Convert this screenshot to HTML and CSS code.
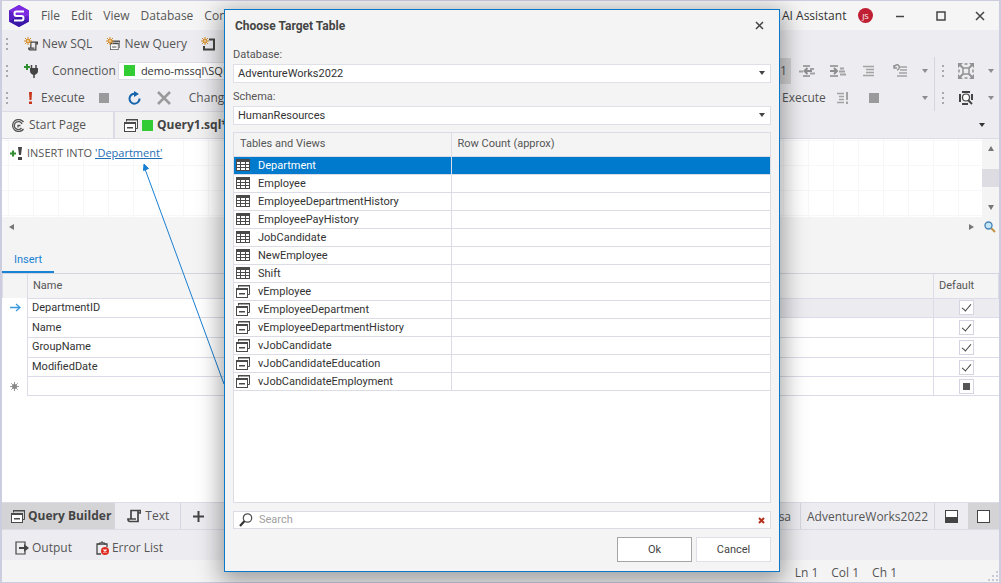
FILE: index.html
```html
<!DOCTYPE html>
<html lang="en">
<head>
  <meta charset="UTF-8" />
  <meta name="viewport" content="width=device-width, initial-scale=1.0"/>
  <title>Query1.sql</title>
  <link rel="stylesheet" href="styles.css">
</head>
<body>

  <!-- shared icons -->
  <svg class="defs" width="0" height="0">
    <symbol id="table" viewBox="0 0 14 14">
      <rect x="0.5" y="1.5" width="13" height="11" fill="#fff" stroke="#4a4a4a"/>
      <path d="M0 1h14v3H0z" fill="#4a4a4a"/>
      <path d="M0 6.500h14M0 9.500h14M4.500 4v9M9.500 4v9" stroke="#4a4a4a" fill="none"/>
    </symbol>
    <symbol id="view" viewBox="0 0 14 14">
      <path d="M2.500 3.500v-2h11v9H12" fill="none" stroke="#4a4a4a"/>
      <path d="M2 1h12v1.500H2z" fill="#4a4a4a"/>
      <rect x="0.500" y="4.500" width="11" height="9" fill="#fff" stroke="#4a4a4a"/>
      <path d="M0 4h12v2H0zM3 9h6v1.500H3z" fill="#4a4a4a"/>
    </symbol>
    <symbol id="star" viewBox="0 0 8 8">
      <path d="M4 0v8M0 4h8M1 1l6 6M7 1L1 7" stroke="#d08a2a" fill="none"/>
      <circle cx="4" cy="4" r="2.300" fill="#d9983a"/>
      <circle cx="4" cy="4" r="0.800" fill="#fff"/>
    </symbol>
    <symbol id="scroll" viewBox="0 0 14 14">
      <path d="M4 10V1.500h9.500V4H11M11 2v10.500H2.500Q0.800 12 1 10h8" fill="none" stroke="#444" stroke-width="1.700"/>
    </symbol>
    <symbol id="lines" viewBox="0 0 12 12">
      <path d="M0 1.500h11M3 4.500h8M3 7.500h8M0 10.500h11" stroke="#a3a3a5" stroke-width="1.500" fill="none"/>
    </symbol>
  </svg>

  <div class="window">
    <header class="titlebar">
      <svg class="logo" viewBox="0 0 20 22">
        <path d="M10 0l10 5.500v11L10 22 0 16.500v-11z" fill="#5a1fc4"/>
        <path d="M10 0l10 5.500v6L10 11 0 5.500z" fill="#7d2be0"/>
        <path d="M0 16.500L10 11l10 5.500L10 22z" fill="#3b17a8"/>
        <path d="M15 6.500H7.500q-2 0-2 2.200t2 2.300h5q2 0 2 2.200t-2 2.300H5" fill="none" stroke="#fff" stroke-width="2"/>
      </svg>
      <nav class="menu">
        <a href="#">File</a>
        <a href="#">Edit</a>
        <a href="#">View</a>
        <a href="#">Database</a>
        <a href="#">Com</a>
      </nav>
      <div class="title-right">
        <a class="assistant" href="#">AI Assistant</a>
        <span class="avatar">JS</span>
        <button class="win-btn" aria-label="Minimize"><svg width="10" height="10"><path d="M1 5.500h8" stroke="#444" stroke-width="1.500"/></svg></button>
        <button class="win-btn" aria-label="Maximize"><svg width="10" height="10"><rect x="1" y="1" width="8" height="8" fill="none" stroke="#444" stroke-width="1.500"/></svg></button>
        <button class="win-btn" aria-label="Close"><svg width="10" height="10"><path d="M1 1l8 8M9 1L1 9" stroke="#444" stroke-width="1.500"/></svg></button>
      </div>
    </header>

    <div class="toolbars">
      <div class="toolbar-left">
        <div class="toolbar">
          <i class="grip"></i>
          <button class="tool new-sql">
            <svg width="14" height="14"><use href="#scroll" x="4" y="4" width="10" height="10"/><use href="#star" width="8" height="8"/></svg>New SQL
          </button>
          <button class="tool">
            <svg width="14" height="14"><use href="#view" x="4" y="3" width="10" height="10"/><use href="#star" width="8" height="8"/></svg>New Query
          </button>
          <button class="tool" aria-label="New document">
            <svg width="14" height="14"><path d="M8 2.500h5v10H3V9" fill="none" stroke="#444" stroke-width="2"/><use href="#star" width="8" height="8"/></svg>
          </button>
        </div>
        <div class="toolbar">
          <i class="grip"></i>
          <button class="tool plug" aria-label="New connection">
            <svg width="14" height="14"><path d="M0 3h6M3 0v6" stroke="#2f8f2f" stroke-width="2"/><path d="M7.500 1v4M12 1v4M10 10v4" stroke="#444" stroke-width="1.500"/><path d="M6 4h8v3q0 3-4 4-4-1-4-4z" fill="#444"/></svg>
          </button>
          <label class="conn-label" for="conn">Connection</label>
          <span class="conn-box">
            <i class="square"></i>
            <input id="conn" type="text" value="demo-mssql\SQLEXPRESS">
          </span>
        </div>
        <div class="toolbar">
          <i class="grip"></i>
          <button class="tool execute">
            <svg width="5" height="12"><path d="M1 0h3l-.5 8h-2zM1 9.500h3V12H1z" fill="#c8351c"/></svg>Execute
          </button>
          <button class="tool stop" aria-label="Stop"><svg width="10" height="10"><rect width="10" height="10" fill="#9a9a9c"/></svg></button>
          <button class="tool refresh" aria-label="Refresh"><svg width="13" height="14"><path d="M7 2.700A5 5 0 1 0 11.500 7.500" fill="none" stroke="#1464ad" stroke-width="2"/><path d="M6 0l5 3-5 3z" fill="#1464ad"/></svg></button>
          <button class="tool cancel" aria-label="Cancel"><svg width="14" height="14"><path d="M1 1l12 12M13 1L1 13" stroke="#9a9a9c" stroke-width="2.500"/></svg></button>
          <button class="tool change">Change</button>
        </div>
      </div>

      <div class="toolbar-mid">
        <div class="toolbar">
          <button class="slot pressed" aria-label="Line numbers">1</button>
          <button class="slot" aria-label="Decrease indent"><svg width="16" height="12"><path d="M4 1h7M4 11h7M0 6.500h4M11 4h4M11 8.500h5" stroke="#a3a3a5" stroke-width="2"/><path d="M8.500 3L5.500 6l3 3M6 6h7" fill="none" stroke="#8d8d90" stroke-width="2"/></svg></button>
          <button class="slot" aria-label="Increase indent"><svg width="16" height="12"><path d="M0 1h8M0 11h8M10 3.500h4M9 6.500h6M10 9.500h6" stroke="#a3a3a5" stroke-width="2"/><path d="M4 3l3 3-3 3M0 6h7" fill="none" stroke="#8d8d90" stroke-width="2"/></svg></button>
          <button class="slot" aria-label="Comment"><svg width="12" height="12"><use href="#lines"/></svg></button>
          <button class="slot" aria-label="Uncomment"><svg width="14" height="13"><path d="M7 3h7M7 6h7M6 9h8M4 12h10" stroke="#a3a3a5" stroke-width="1.500"/><path d="M1 1v3h3M1 3q3-4 5-1 1 3-2 4" fill="none" stroke="#939395" stroke-width="1.500"/></svg></button>
          <i class="caret"></i>
        </div>
        <div class="toolbar">
          <button class="tool execute-short">Execute</button>
          <button class="slot" aria-label="Execute to cursor"><svg width="12" height="12"><path d="M0 1.500h7M2 4.500h5M2 7.500h5M0 10.500h7" stroke="#a3a3a5" stroke-width="1.500"/><path d="M10 0v8M10 9.500V12" stroke="#a3a3a5" stroke-width="2"/></svg></button>
          <button class="slot" aria-label="Stop"><svg width="10" height="10"><rect width="10" height="10" fill="#9a9a9c"/></svg></button>
          <i class="caret"></i>
        </div>
      </div>

      <div class="toolbar-end">
        <div class="toolbar">
          <i class="grip"></i>
          <button class="slot" aria-label="Fit to window"><svg width="16" height="16"><rect x="5" y="5" width="6" height="6" fill="none" stroke="#939395" stroke-width="1.500"/><path d="M0 0h5L0 5zM16 0h-5l5 5zM0 16h5l-5-5zM16 16h-5l5-5z" fill="#939395"/><path d="M1 1l4 4M15 1l-4 4M1 15l4-4M15 15l-4-4" stroke="#939395" stroke-width="2"/><path d="M6.500 1h3M6.500 15h3M1 6.500v3M15 6.500v3" stroke="#939395" stroke-width="1.500"/></svg></button>
          <i class="caret"></i>
        </div>
        <div class="toolbar">
          <i class="grip"></i>
          <button class="slot" aria-label="Zoom"><svg width="14" height="14"><path d="M3 1h8M3 13h6M1 3v8M13 3v6" stroke="#444" stroke-width="2" fill="none"/><circle cx="7" cy="6.500" r="3.500" fill="#fff" stroke="#444" stroke-width="1.200"/><path d="M9 9l4 4" stroke="#444" stroke-width="2"/></svg></button>
          <i class="caret"></i>
        </div>
      </div>
    </div>

    <div class="tabs">
      <button class="tab start">
        <svg width="13" height="13"><g fill="none" stroke="#555" stroke-width="1.300"><path d="M11.500 3A6 6 0 1 0 11.500 10"/><path d="M10 5A4 4 0 1 0 9.500 9"/><path d="M8.500 6.500H6v2"/></g></svg>Start Page
      </button>
      <button class="tab query">
        <svg width="14" height="14"><use href="#view"/></svg><i class="square"></i>Query1.sql*
      </button>
      <i class="caret dark"></i>
    </div>

    <div class="diagram">
      <div class="canvas">
        <svg width="13" height="13"><path d="M0 6.500h6M3 3.500v6" stroke="#2f8f2f" stroke-width="2"/><path d="M8 0h4l-1 8H9zM8 10h4v3H8z" fill="#444"/></svg>
        <span>INSERT INTO <a href="#">'Department'</a></span>
      </div>
      <div class="vscroll"><i class="up"></i><i class="thumb"></i><i class="down"></i></div>
    </div>
    <div class="hscroll">
      <i class="left"></i>
      <i class="right"></i>
      <svg width="12" height="12"><path d="M7 7l4 4" stroke="#c09040" stroke-width="2"/><circle cx="4.500" cy="4.500" r="3.500" fill="#c4e6fa" stroke="#4d86b8" stroke-width="1.400"/></svg>
    </div>

    <div class="subtabs"><button class="subtab">Insert</button></div>

    <main class="grid-area">
      <table class="columns">
        <thead>
          <tr><th class="mark"></th><th>Name</th><th class="value"></th><th class="default">Default</th></tr>
        </thead>
        <tbody>
          <tr class="current">
            <td class="mark"><svg width="11" height="9"><path d="M0 4.500h9M6 1l4 3.500L6 8" fill="none" stroke="#3a9ade" stroke-width="1.300"/></svg></td>
            <td>DepartmentID</td><td class="value"></td><td class="default"><input type="checkbox" aria-label="DepartmentID default" checked></td>
          </tr>
          <tr><td class="mark"></td><td>Name</td><td class="value"></td><td class="default"><input type="checkbox" aria-label="Name default" checked></td></tr>
          <tr><td class="mark"></td><td>GroupName</td><td class="value"></td><td class="default"><input type="checkbox" aria-label="GroupName default" checked></td></tr>
          <tr><td class="mark"></td><td>ModifiedDate</td><td class="value"></td><td class="default"><input type="checkbox" aria-label="ModifiedDate default" checked></td></tr>
          <tr>
            <td class="mark"><svg width="9" height="9"><path d="M4.500 0v9M0 4.500h9M1.300 1.300l6.400 6.400M7.700 1.300L1.300 7.700" stroke="#999"/><circle cx="4.500" cy="4.500" r="2.500" fill="#888"/></svg></td>
            <td></td><td class="value"></td><td class="default"><input type="checkbox" class="mixed" aria-label="New row default"></td>
          </tr>
        </tbody>
      </table>
    </main>

    <div class="viewbar">
      <button class="view-tab active"><svg width="14" height="14"><use href="#view"/></svg>Query Builder</button>
      <button class="view-tab text"><svg width="14" height="14"><use href="#scroll"/></svg>Text</button>
      <button class="view-tab add" aria-label="Add view"><svg width="11" height="11"><path d="M0 5.500h11M5.500 0v11" stroke="#444" stroke-width="2"/></svg></button>
      <span class="user">sa</span>
      <span class="db">AdventureWorks2022</span>
      <button class="layout" aria-label="Split layout"><svg width="13" height="13"><rect x="0.500" y="0.500" width="12" height="12" fill="#fff" stroke="#444"/><path d="M1 7h11v5H1z" fill="#444"/></svg></button>
      <button class="layout on" aria-label="Single layout"><svg width="13" height="13"><rect x="0.500" y="0.500" width="12" height="12" fill="#fff" stroke="#444"/></svg></button>
    </div>

    <div class="panels">
      <button class="panel-btn"><svg width="14" height="14"><path d="M10 4V1H1v12h9v-3" fill="none" stroke="#444" stroke-width="1.200"/><path d="M4 7h5" stroke="#444" stroke-width="2"/><path d="M9 3l5 4-5 4z" fill="#444"/></svg>Output</button>
      <button class="panel-btn"><svg width="13" height="14"><path d="M5 13H1V3h10v3" fill="none" stroke="#444" stroke-width="1.300"/><path d="M3 4V2h2l1-1.500L7 2h2v2" fill="none" stroke="#444"/><circle cx="9" cy="10" r="4" fill="#e02b20"/><path d="M7.500 8.500l3 3M10.500 8.500l-3 3" stroke="#fff" stroke-width="1.200"/></svg>Error List</button>
    </div>

    <footer class="status">
      <span>Ln 1</span><span>Col 1</span><span>Ch 1</span>
      <svg width="11" height="11"><path d="M8 0h2v2H8zM4 4h2v2H4zM8 4h2v2H8zM0 8h2v2H0zM4 8h2v2H4zM8 8h2v2H8z" fill="#c9c9d4"/></svg>
    </footer>

    <svg class="pointer" width="86" height="224">
      <path d="M4 5l79 215" stroke="#1a7fd0" stroke-width="1"/>
      <path d="M3 0l4.500 4.500L2.500 6.500z" fill="#1a7fd0" stroke="#1a7fd0"/>
    </svg>
  </div>

  <div class="overlay">
    <section class="dialog" role="dialog" aria-label="Choose Target Table">
      <div class="dialog-head">
        <h1>Choose Target Table</h1>
        <button class="close" aria-label="Close"><svg width="9" height="9"><path d="M1 1l7 7M8 1L1 8" stroke="#444" stroke-width="1.500"/></svg></button>
      </div>

      <label for="database">Database:</label>
      <div class="select">
        <select id="database"><option>AdventureWorks2022</option></select>
      </div>

      <label for="schema">Schema:</label>
      <div class="select">
        <select id="schema"><option>HumanResources</option></select>
      </div>

      <div class="list">
        <table>
          <thead><tr><th class="object">Tables and Views</th><th>Row Count (approx)</th></tr></thead>
          <tbody>
            <tr class="selected"><td><svg><use href="#table"/></svg>Department</td><td></td></tr>
            <tr><td><svg><use href="#table"/></svg>Employee</td><td></td></tr>
            <tr><td><svg><use href="#table"/></svg>EmployeeDepartmentHistory</td><td></td></tr>
            <tr><td><svg><use href="#table"/></svg>EmployeePayHistory</td><td></td></tr>
            <tr><td><svg><use href="#table"/></svg>JobCandidate</td><td></td></tr>
            <tr><td><svg><use href="#table"/></svg>NewEmployee</td><td></td></tr>
            <tr><td><svg><use href="#table"/></svg>Shift</td><td></td></tr>
            <tr><td><svg><use href="#view"/></svg>vEmployee</td><td></td></tr>
            <tr><td><svg><use href="#view"/></svg>vEmployeeDepartment</td><td></td></tr>
            <tr><td><svg><use href="#view"/></svg>vEmployeeDepartmentHistory</td><td></td></tr>
            <tr><td><svg><use href="#view"/></svg>vJobCandidate</td><td></td></tr>
            <tr><td><svg><use href="#view"/></svg>vJobCandidateEducation</td><td></td></tr>
            <tr><td><svg><use href="#view"/></svg>vJobCandidateEmployment</td><td></td></tr>
          </tbody>
        </table>
      </div>

      <div class="search">
        <svg width="14" height="14"><circle cx="8.500" cy="5" r="4.200" fill="none" stroke="#555" stroke-width="1.300"/><path d="M5.500 8L1 13" stroke="#333" stroke-width="2.200"/></svg>
        <input type="text" placeholder="Search" aria-label="Search">
        <button aria-label="Clear"><svg width="7" height="7"><path d="M1 1l5 5M6 1L1 6" stroke="#b5301d" stroke-width="2"/></svg></button>
      </div>

      <div class="actions">
        <button class="ok">Ok</button>
        <button>Cancel</button>
      </div>
    </section>
  </div>

</body>
</html>
```
FILE: styles.css
```css
* {
  box-sizing: border-box;
}

body {
  margin: 0;
  font-family: "Open Sans", "Noto Sans", sans-serif;
  font-size: 12px;
  line-height: 16px;
  color: #555;
}

button, input, select {
  font: inherit;
  color: inherit;
  border: 0;
  padding: 0;
  margin: 0;
  background: none;
}

a {
  color: inherit;
  text-decoration: none;
}

svg {
  display: block;
  flex: none;
}

.defs {
  position: absolute;
}

.window {
  position: relative;
  display: flex;
  flex-direction: column;
  height: 100vh;
  overflow: hidden;
  border: 1px solid #cdcde0;
  border-width: 1px 2px 1px 2px;
  background: #f4f4f4;
}

/* title bar */
.titlebar {
  display: flex;
  align-items: center;
  height: 29px;
  padding-left: 7px;
  background: #f5f5f5;
}

.logo {
  width: 20px;
  height: 22px;
}

.menu {
  display: flex;
  flex: 1;
  gap: 11px;
  margin-left: 12px;
}

.title-right {
  display: flex;
  align-items: center;
  width: 219px;
  padding-left: 2px;
}

.assistant {
  flex: 1;
  color: #333;
  white-space: nowrap;
}

.avatar {
  width: 15px;
  height: 15px;
  margin-right: 6px;
  border-radius: 50%;
  background: #c01f33;
  color: #fff;
  font-size: 8px;
  line-height: 15px;
  text-align: center;
}

.win-btn {
  display: flex;
  justify-content: center;
  width: 41px;
}

.win-btn:last-child {
  width: 38px;
}

/* toolbars */
.toolbars {
  display: flex;
  height: 81px;
  background: #ededf1;
}

.toolbar-left {
  flex: 1;
  min-width: 0;
  overflow: hidden;
}

.toolbar {
  display: flex;
  align-items: center;
  height: 27px;
}

.grip {
  width: 2px;
  height: 12px;
  margin-left: 4px;
  background: repeating-linear-gradient(#a9a9ad 0 2px, transparent 2px 5px);
}

.tool {
  display: flex;
  align-items: center;
  gap: 4px;
  margin-left: 14px;
  white-space: nowrap;
}

.grip + .tool {
  margin-left: 16px;
}

.conn-label {
  margin: 0 2px 0 14px;
}

.conn-box {
  display: flex;
  align-items: center;
  gap: 6px;
  width: 220px;
  height: 18px;
  padding-left: 5px;
  border: 1px solid #dcdce6;
  background: #fff;
  color: #333;
}

.square {
  width: 11px;
  height: 11px;
  background: #33cc33;
}

/* compact text in editors, grids and the dialog */
.conn-box, .canvas {
  font-size: 11px;
}

.subtab, .columns, .dialog {
  font-family: Roboto, "Open Sans", sans-serif;
  font-size: 11px;
}

.grip + .execute {
  gap: 8px;
  margin-left: 20px;
}

.refresh {
  margin-left: 19px;
}

.cancel {
  margin-left: 16px;
}

.change {
  margin-left: 18px;
}

.toolbar-mid {
  display: flex;
  flex-direction: column;
  justify-content: flex-end;
  width: 154px;
}

.toolbar-end {
  display: flex;
  flex-direction: column;
  justify-content: flex-end;
  width: 65px;
}

.toolbar-end .toolbar {
  border-left: 1px solid #d5d5df;
}

.toolbar-end .grip {
  margin: 0 7px 0 7px;
}

.slot {
  display: flex;
  justify-content: center;
  width: 31px;
}

.pressed {
  align-items: center;
  justify-content: flex-start;
  width: 11px;
  height: 26px;
  background: #d2d2d4;
}

.execute-short {
  width: 45px;
  margin-left: 2px;
}

.caret {
  width: 0;
  height: 0;
  margin: 0 6px 0 auto;
  border: 3px solid transparent;
  border-top: 4px solid #8d8d90;
  border-bottom: 0;
}

.toolbar-end .caret {
  margin-right: 5px;
}

.toolbar-end .slot {
  width: 30px;
}

/* document tabs */
.tabs {
  display: flex;
  align-items: center;
  height: 28px;
  background: #ededf1;
  border-bottom: 1px solid #dcdce6;
}

.tab {
  display: flex;
  align-items: center;
  gap: 4px;
  height: 27px;
  background: #f4f4f4;
  border-top: 1px solid #dcdce6;
  white-space: nowrap;
}

.start {
  width: 113px;
  padding-left: 10px;
  border-right: 2px solid #dcdce6;
}

.query {
  padding-left: 9px;
  background: #f1f1f1;
  color: #444;
  font-weight: bold;
}

.caret.dark {
  margin-right: 14px;
  border-top-color: #333;
}

/* diagram */
.diagram {
  display: flex;
  height: 78px;
}

.canvas {
  display: flex;
  flex: 1;
  align-items: flex-start;
  gap: 4px;
  padding: 6px 8px;
  background-color: #fff;
  background-image: linear-gradient(#f7f7f9 1px, transparent 1px), linear-gradient(90deg, #f7f7f9 1px, transparent 1px);
  background-size: 25px 25px;
  background-position: 6px 1px;
}

.canvas svg {
  margin-top: 2px;
}

.canvas a {
  color: #1f6fb5;
  text-decoration: underline;
}

.vscroll {
  display: flex;
  flex-direction: column;
  align-items: center;
  justify-content: space-between;
  width: 17px;
  padding: 7px 0;
}

.thumb {
  width: 17px;
  height: 18px;
  background: #dcdce2;
}

.up, .down {
  border: 3px solid transparent;
}

.up {
  border-top: 0;
  border-bottom: 5px solid #777;
}

.down {
  border-bottom: 0;
  border-top: 5px solid #777;
}

.hscroll {
  display: flex;
  align-items: center;
  height: 19px;
  padding: 0 3px 0 7px;
}

.left, .right {
  border: 3px solid transparent;
}

.left {
  border-left: 0;
  border-right: 5px solid #777;
}

.right {
  margin: 0 10px 0 auto;
  border-right: 0;
  border-left: 5px solid #777;
}

.subtabs {
  display: flex;
  align-items: flex-end;
  height: 38px;
  border-bottom: 1px solid #d5d5df;
}

.subtab {
  width: 52px;
  height: 26px;
  padding-top: 2px;
  border-bottom: 2px solid #1a82d2;
  color: #1a82d2;
}

/* column grid */
.grid-area {
  flex: 1;
  min-height: 0;
  background: #fff;
}

.columns {
  width: 100%;
  height: 122px;
  border-collapse: collapse;
  table-layout: fixed;
  line-height: 16px;
  color: #333;
}

.columns th {
  height: 24px;
  padding: 0 5px;
  border: 1px solid #dcdce8;
  border-top: 0;
  background: #f4f4f4;
  color: #555;
  font-weight: normal;
  text-align: left;
}

.columns td {
  padding: 0 4px;
  border-bottom: 1px solid #dcdce8;
}

.columns .mark {
  width: 25px;
  padding: 0 0 0 7px;
  border-bottom: 0;
  border-right: 1px solid #dcdce8;
}

.columns .value {
  width: 50%;
  border-left: 0;
}

.columns .default {
  width: 65px;
  border-left: 1px solid #dcdce8;
}

td.default {
  text-align: center;
}

.current .value, .current .default {
  background: #ebebf0;
}

.columns input {
  appearance: none;
  display: grid;
  place-items: center;
  width: 15px;
  height: 15px;
  margin: 0 auto;
  border: 1px solid #d5d5e2;
  background: #fff;
}

.columns input:checked::before {
  content: "";
  width: 4px;
  height: 8px;
  border: solid #444;
  border-width: 0 1px 1px 0;
  transform: translateY(-1px) rotate(40deg);
}

.mixed::before {
  content: "";
  width: 7px;
  height: 7px;
  background: #555;
}

/* bottom bars */
.viewbar {
  display: flex;
  height: 28px;
  background: #ededf1;
  border: 1px solid #dcdce6;
  border-width: 1px 0;
}

.view-tab {
  display: flex;
  align-items: center;
  gap: 4px;
  padding: 0 11px 0 12px;
  border-right: 1px solid #d5d5df;
}

.view-tab.active {
  gap: 3px;
  padding: 0 3px 0 9px;
  background: #d4d4d6;
  color: #444;
  font-weight: bold;
}

.view-tab.add {
  border-right: 0;
}

.user {
  margin-left: auto;
  padding: 6px 9px 0 0;
}

.db {
  padding: 6px 6px 0 6px;
  border: 1px solid #d5d5df;
  border-width: 0 1px;
}

.layout {
  display: flex;
  align-items: center;
  justify-content: center;
  width: 33px;
}

.layout.on {
  width: 31px;
  background: #d4d4d6;
}

.panels {
  display: flex;
  gap: 24px;
  height: 30px;
  padding: 6px 13px 0;
  background: #ededf1;
}

.panel-btn {
  display: flex;
  align-items: center;
  gap: 3px;
  height: 24px;
}

.status {
  display: flex;
  gap: 13px;
  align-items: center;
  justify-content: flex-end;
  height: 22px;
  padding-top: 4px;
}

.status svg {
  align-self: flex-end;
  margin-left: 78px;
}

.pointer {
  position: absolute;
  left: 139px;
  top: 163px;
}

/* dialog */
.overlay {
  position: absolute;
  inset: 0;
  display: flex;
  justify-content: center;
  padding: 9px 0 11px 3px;
}

.dialog {
  display: flex;
  flex-direction: column;
  width: 556px;
  padding: 0 8px 9px;
  border: 1px solid #0a78c8;
  background: #f4f4f4;
  box-shadow: 0 6px 22px 4px rgba(0, 0, 0, 0.35);
}

.dialog-head {
  display: flex;
  align-items: center;
  justify-content: space-between;
  height: 31px;
  padding: 0 7px 0 2px;
}

h1 {
  margin: 0;
  font-size: 12px;
  color: #444;
}

.dialog label {
  margin-top: 6px;
}

.select {
  position: relative;
  height: 19px;
  margin-top: 1px;
}

.select + label {
  margin-top: 6px;
}

.select::after {
  content: "";
  position: absolute;
  right: 6px;
  top: 7px;
  border: 3px solid transparent;
  border-top: 4px solid #444;
  border-bottom: 0;
}

.select select {
  appearance: none;
  width: 100%;
  height: 19px;
  padding: 0 4px;
  border: 1px solid #dfdfe8;
  background: #fff;
  color: #333;
}

.list {
  flex: 1;
  margin-top: 7px;
  border: 1px solid #dcdce4;
  background: #fff;
}

.list table {
  width: 100%;
  border-collapse: collapse;
  table-layout: fixed;
}

.list th {
  height: 23px;
  padding: 0 6px;
  background: #f4f4f4;
  font-weight: normal;
  text-align: left;
}

.list .object {
  width: 217px;
}

.list th, .list td {
  border-bottom: 1px solid #dcdce6;
}

.list th + th, .list td + td {
  border-left: 1px solid #dcdce6;
}

.list td {
  height: 18px;
  padding: 0 2px;
  color: #333;
}

.list td:first-child {
  line-height: 17px;
}

.list svg {
  float: left;
  width: 14px;
  height: 14px;
  margin: 1px 8px 0 0;
}

.list .selected td {
  background: #007acc;
  color: #fff;
}

.search {
  display: flex;
  align-items: center;
  height: 18px;
  margin-top: 8px;
  padding: 0 5px;
  border: 1px solid #dcdce4;
  background: #fff;
}

.search input {
  flex: 1;
  margin-left: 6px;
}

.search input::placeholder {
  color: #a0a0a0;
}

.actions {
  display: flex;
  justify-content: flex-end;
  gap: 4px;
  margin-top: 8px;
}

.actions button {
  width: 75px;
  height: 25px;
  border: 1px solid #dfdfe8;
  background: #fff;
  color: #444;
}

.actions .ok {
  border-color: #a5a5a5;
}
```
